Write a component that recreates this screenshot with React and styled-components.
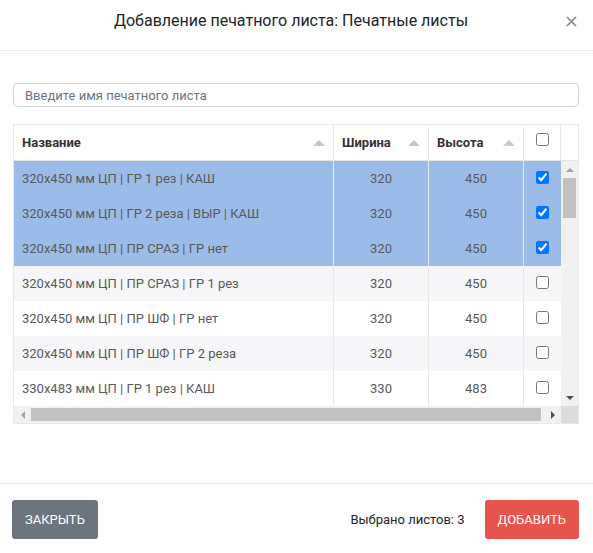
import styled, { createGlobalStyle, css } from "styled-components";

const GlobalStyle = createGlobalStyle`
  html, body {
    margin: 0;
    padding: 0;
    background: #fff;
    font-family: Roboto, "Liberation Sans", sans-serif;
  }
  * { box-sizing: border-box; }
`;

const sheets = [
  { name: "320x450 мм ЦП | ГР 1 рез | КАШ", w: 320, h: 450, checked: true },
  { name: "320x450 мм ЦП | ГР 2 реза | ВЫР | КАШ", w: 320, h: 450, checked: true },
  { name: "320x450 мм ЦП | ПР СРАЗ | ГР нет", w: 320, h: 450, checked: true },
  { name: "320x450 мм ЦП | ПР СРАЗ | ГР 1 рез", w: 320, h: 450 },
  { name: "320x450 мм ЦП | ПР ШФ | ГР нет", w: 320, h: 450 },
  { name: "320x450 мм ЦП | ПР ШФ | ГР 2 реза", w: 320, h: 450 },
  { name: "330x483 мм ЦП | ГР 1 рез | КАШ", w: 330, h: 483 },
];

const App = () => {
  const selected = sheets.filter((s) => s.checked).length;
  return (
    <>
      <GlobalStyle />
      <Modal>
        <Header>
          <Title>Добавление печатного листа: Печатные листы</Title>
          <Close aria-label="close">
            <svg width="11" height="11" viewBox="0 0 11 11">
              <path d="M1 1 L10 10 M10 1 L1 10" stroke="#8a8a8a" strokeWidth="1.7" />
            </svg>
          </Close>
        </Header>
        <Body>
          <Search type="text" placeholder="Введите имя печатного листа" />
          <Table>
            <HeadRow>
              <HeadCell>
                Название
                <SortArrow />
              </HeadCell>
              <HeadCell>
                Ширина
                <SortArrow />
              </HeadCell>
              <HeadCell>
                Высота
                <SortArrow />
              </HeadCell>
              <HeadCell $center>
                <Check type="checkbox" readOnly />
              </HeadCell>
              <HeadCell />
            </HeadRow>
            <ScrollArea>
              <View>
                {sheets.map((s, i) => (
                  <Row key={i} $selected={s.checked} $striped={i % 2 === 1}>
                    <Cell>{s.name}</Cell>
                    <Cell $center>{s.w}</Cell>
                    <Cell $center>{s.h}</Cell>
                    <Cell $center>
                      <Check type="checkbox" checked={!!s.checked} readOnly />
                    </Cell>
                  </Row>
                ))}
              </View>
              <VBar>
                <BarButton>
                  <Arrow $dir="up" />
                </BarButton>
                <VTrack>
                  <VThumb />
                </VTrack>
                <BarButton>
                  <Arrow $dir="down" $active />
                </BarButton>
              </VBar>
              <HBar>
                <BarButton>
                  <Arrow $dir="left" />
                </BarButton>
                <HTrack>
                  <HThumb />
                </HTrack>
                <BarButton>
                  <Arrow $dir="right" $active />
                </BarButton>
              </HBar>
              <Corner />
            </ScrollArea>
          </Table>
        </Body>
        <Footer>
          <Button $color="#6c757d">Закрыть</Button>
          <Right>
            <Counter>Выбрано листов: {selected}</Counter>
            <Button $color="#e8534d">Добавить</Button>
          </Right>
        </Footer>
      </Modal>
    </>
  );
};
export default App;

const Modal = styled.div`
  width: 593px;
  height: 553px;
  display: flex;
  flex-direction: column;
  background: #fff;
`;

const Header = styled.div`
  height: 51px;
  display: flex;
  align-items: flex-start;
  padding: 11px 16px 0 16px;
  border-bottom: 1px solid #e9ecef;
`;

const Title = styled.div`
  flex: 1;
  text-align: center;
  font-size: 16px;
  line-height: 20px;
  color: #212529;
`;

const Close = styled.button`
  border: none;
  background: none;
  padding: 0;
  margin-top: 5px;
  width: 11px;
  height: 11px;
  display: flex;
  cursor: pointer;
`;

const Body = styled.div`
  flex: 1;
  display: flex;
  flex-direction: column;
  gap: 17px;
  padding: 32px 14px 0 13px;
`;

const Search = styled.input`
  height: 24px;
  border: 1px solid #cfd4d9;
  border-radius: 4px;
  padding: 0 11px;
  font-family: Roboto, "Liberation Sans", sans-serif;
  font-size: 13px;
  color: #495057;
  outline: none;
  &::placeholder {
    color: #6c757d;
  }
`;

const Table = styled.div`
  border: 1px solid #e8e8e8;
  display: flex;
  flex-direction: column;
`;

const cols = "320px 95px 95px 37px";

const HeadRow = styled.div`
  display: grid;
  grid-template-columns: ${cols} 1fr;
  height: 36px;
  border-bottom: 1px solid #e4e4e4;
`;

const HeadCell = styled.div`
  display: flex;
  align-items: center;
  justify-content: ${(p) => (p.$center ? "center" : "space-between")};
  padding: ${(p) => (p.$center ? "0 0 4px 0" : "0 8px 0 8px")};
  border-right: 1px solid #e8e8e8;
  font-size: 13px;
  font-weight: 700;
  color: #333;
  &:last-child {
    border-right: none;
  }
`;

const SortArrow = styled.span`
  width: 0;
  height: 0;
  border-left: 6px solid transparent;
  border-right: 6px solid transparent;
  border-bottom: 6px solid #c8c8c8;
`;

const ScrollArea = styled.div`
  display: grid;
  grid-template-columns: 1fr 17px;
  grid-template-rows: 245px 17px;
`;

const View = styled.div`
  overflow: auto;
  scrollbar-width: none;
  &::-webkit-scrollbar {
    display: none;
  }
`;

const Row = styled.div`
  display: grid;
  grid-template-columns: ${cols};
  height: 35px;
  background: ${(p) => (p.$selected ? "#9bbbe9" : p.$striped ? "#f6f6f8" : "#fff")};
`;

const Cell = styled.div`
  display: flex;
  align-items: center;
  justify-content: ${(p) => (p.$center ? "center" : "flex-start")};
  padding: 0 8px;
  border-right: 1px solid #e8e8e8;
  font-size: 13px;
  color: #5a5a5a;
  white-space: nowrap;
  &:last-child {
    border-right: none;
  }
`;

const Check = styled.input`
  width: 13px;
  height: 13px;
  margin: 0 0 2px 0;
`;

const VBar = styled.div`
  display: flex;
  flex-direction: column;
  background: #f1f1f1;
`;

const HBar = styled.div`
  display: flex;
  background: #f1f1f1;
`;

const Corner = styled.div`
  background: #dcdcdc;
`;

const BarButton = styled.div`
  flex: 0 0 17px;
  width: 17px;
  height: 17px;
  display: flex;
  align-items: center;
  justify-content: center;
`;

const arrowShapes = {
  up: css`
    border-left: 4px solid transparent;
    border-right: 4px solid transparent;
    border-bottom: 4px solid var(--c);
  `,
  down: css`
    border-left: 4px solid transparent;
    border-right: 4px solid transparent;
    border-top: 4px solid var(--c);
  `,
  left: css`
    border-top: 4px solid transparent;
    border-bottom: 4px solid transparent;
    border-right: 4px solid var(--c);
  `,
  right: css`
    border-top: 4px solid transparent;
    border-bottom: 4px solid transparent;
    border-left: 4px solid var(--c);
  `,
};

const Arrow = styled.span`
  --c: ${(p) => (p.$active ? "#505050" : "#a3a3a3")};
  width: 0;
  height: 0;
  ${(p) => arrowShapes[p.$dir]}
`;

const VTrack = styled.div`
  flex: 1;
  padding: 0 2px;
`;

const VThumb = styled.div`
  height: 40px;
  background: #c1c1c1;
`;

const HTrack = styled.div`
  flex: 1;
  padding: 2px 3px 2px 0;
`;

const HThumb = styled.div`
  height: 100%;
  background: #c1c1c1;
`;

const Footer = styled.div`
  height: 70px;
  border-top: 1px solid #e9ecef;
  display: flex;
  justify-content: space-between;
  align-items: flex-start;
  padding: 16px 14px 0 12px;
`;

const Right = styled.div`
  display: flex;
  align-items: center;
  gap: 20px;
`;

const Counter = styled.span`
  font-size: 13px;
  color: #212529;
`;

const Button = styled.button`
  height: 39px;
  padding: 0 13px;
  border: none;
  border-radius: 3px;
  background: ${(p) => p.$color};
  color: #fff;
  font-family: Roboto, "Liberation Sans", sans-serif;
  font-size: 13px;
  text-transform: uppercase;
  cursor: pointer;
`;
